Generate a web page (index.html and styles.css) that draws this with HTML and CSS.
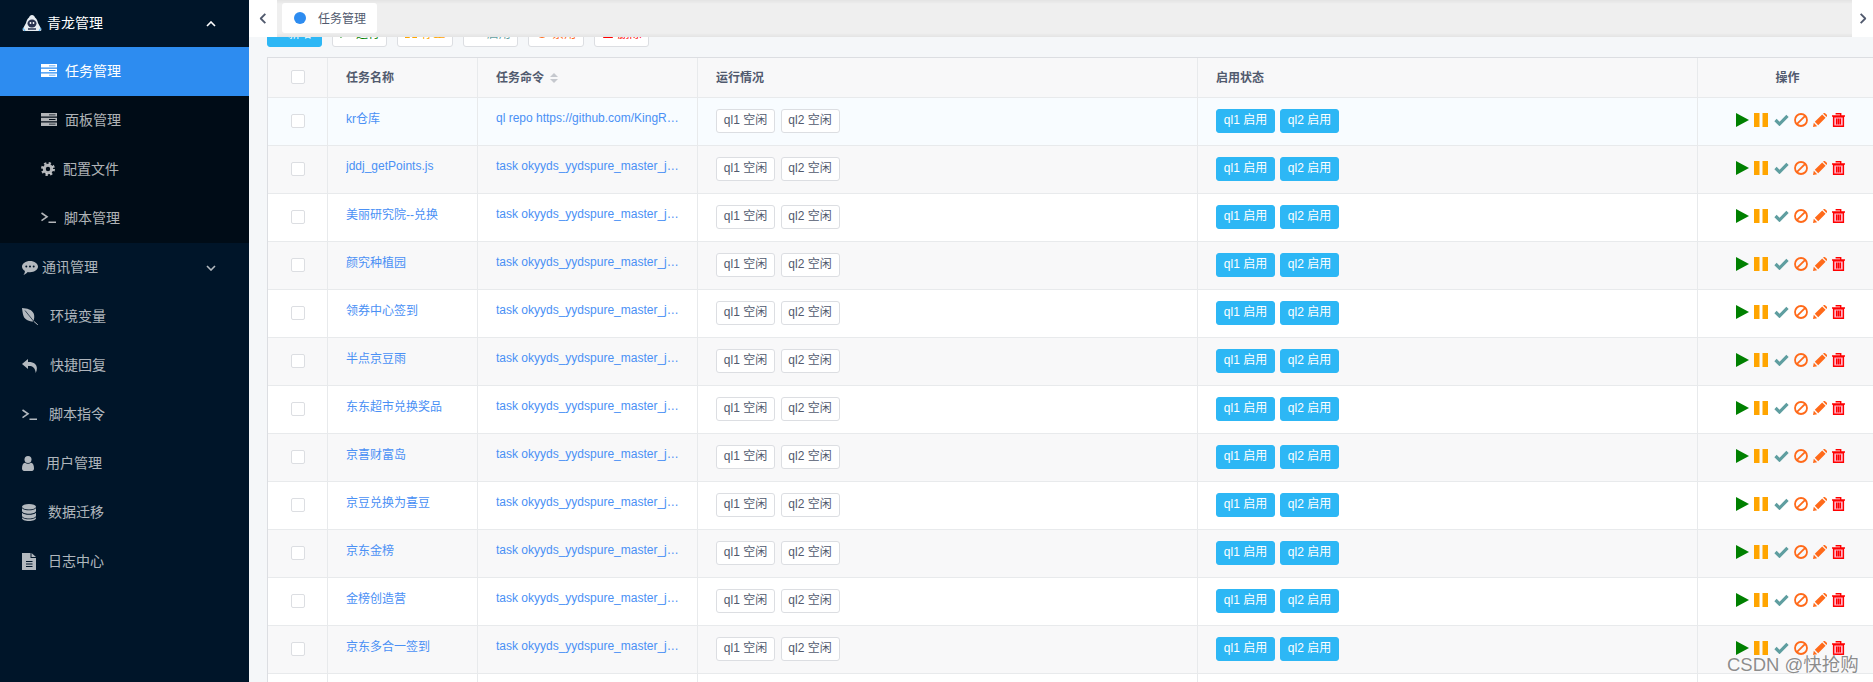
FILE: index.html
```html
<!DOCTYPE html>
<html lang="zh-CN">
  <head>
    <meta charset="UTF-8" />
    <meta name="viewport" content="width=device-width, initial-scale=1.0" />
    <title>任务管理</title>
    <link rel="stylesheet" href="styles.css">
  </head>
  <body>
    <svg class="defs" width="0" height="0">
      <symbol id="i-server" viewBox="0 0 16 13">
        <path fill-rule="evenodd" d="M0 0h16v3.6H0zM0 4.7h16v3.6H0zM0 9.4h16V13H0zM8 1.4v.8h6.5v-.8zM8 6.1v.8h6.5v-.8zM8 10.8v.8h6.5v-.8z" />
      </symbol>
      <symbol id="i-gear" viewBox="0 0 14 14">
        <circle cx="7" cy="7" r="3.7" fill="none" stroke="currentColor" stroke-width="3" />
        <circle cx="7" cy="7" r="5.9" fill="none" stroke="currentColor" stroke-width="2.2" stroke-dasharray="2.3 2.33" />
      </symbol>
      <symbol id="i-term" viewBox="0 0 15 11">
        <path d="M.5 1l5.500 3.800-5.500 3.800M7.500 10.200H15" fill="none" stroke="currentColor" stroke-width="1.600" />
      </symbol>
      <symbol id="i-msg" viewBox="0 0 16 14">
        <path fill-rule="evenodd" d="M8 0c4.4 0 8 2.5 8 5.6s-3.6 5.6-8 5.6c-.8 0-1.6-.1-2.3-.2C4.600 12.300 3 13.700 1.400 14c.8-1 1.500-2.200 1.500-4C1.100 9 0 7.400 0 5.600 0 2.500 3.600 0 8 0zM4.300 4.600a1 1 0 1 0 0 2 1 1 0 0 0 0-2zm3.700 0a1 1 0 1 0 0 2 1 1 0 0 0 0-2zm3.700 0a1 1 0 1 0 0 2 1 1 0 0 0 0-2z" />
      </symbol>
      <symbol id="i-leaf" viewBox="0 0 16 17">
        <path d="M0 0c5 .4 10 1.500 11.700 5.500 1 2.500.6 5.500-.4 8C7.500 13.500 3 12 1.500 8 .6 5.500.4 2.500 0 0z" />
        <path d="M3 2.500l8.500 10.500" fill="none" stroke="#001529" stroke-width=".7" />
        <path d="M12 13.500l3.800 3.300" fill="none" stroke="currentColor" stroke-width="1" />
      </symbol>
      <symbol id="i-reply" viewBox="0 0 16 14">
        <path d="M6 0L0 5l6 5V7c4-.3 6.800.6 7.800 7C16.600 7.500 14 2.700 6 3z" />
      </symbol>
      <symbol id="i-user" viewBox="0 0 12 15">
        <circle cx="6" cy="3.500" r="3.500" />
        <path d="M3 6.800c1.500 1.300 4.500 1.300 6 0 2 .4 3 2.200 3 5.700 0 1.500-1 2.500-2 2.500H2c-1 0-2-1-2-2.500C0 9 1 7.200 3 6.800z" />
      </symbol>
      <symbol id="i-db" viewBox="0 0 14 17">
        <ellipse cx="7" cy="2.800" rx="7" ry="2.800" />
        <path d="M0 4.300c1.500 1.500 4 2 7 2s5.500-.5 7-2V7c0 1.500-3 2.800-7 2.800S0 8.500 0 7zM0 8.700c1.500 1.500 4 2 7 2s5.500-.5 7-2v3c0 1.500-3 2.700-7 2.700S0 13.200 0 11.700zM0 13.200c1.500 1.500 4 2 7 2s5.500-.5 7-2v1c0 1.500-3 2.800-7 2.800S0 15.700 0 14.200z" />
      </symbol>
      <symbol id="i-file" viewBox="0 0 14 17">
        <path fill-rule="evenodd" d="M0 0h8.500v5H14v12H0zM4 8v1h6.500V8zM4 10.500v1h6.500v-1zM4 13v1h6.500v-1z" />
        <path d="M9.500 0L14 4H9.500z" />
      </symbol>
      <symbol id="i-play" viewBox="0 0 13 14">
        <path d="M0 0l13 7-13 7z" />
      </symbol>
      <symbol id="i-pause" viewBox="0 0 14 14">
        <path d="M0 0h5.500v14H0zM8.500 0H14v14H8.500z" />
      </symbol>
      <symbol id="i-check" viewBox="0 0 15 12">
        <path d="M1.500 6l4 4L13.500 1.800" fill="none" stroke="currentColor" stroke-width="3.200" />
      </symbol>
      <symbol id="i-ban" viewBox="0 0 14 14">
        <circle cx="7" cy="7" r="6" fill="none" stroke="currentColor" stroke-width="1.800" />
        <path d="M2.800 11.200l8.400-8.400" stroke="currentColor" stroke-width="1.800" />
      </symbol>
      <symbol id="i-pencil" viewBox="0 0 14 14">
        <path d="M0 14l.8-4.200 3.400 3.400zM1.800 8.800l7.400-7.400 3.400 3.400-7.400 7.400zM10 .6c.8-.8 1.800-.8 2.400-.2l1.200 1.200c.6.6.6 1.600-.2 2.400z" />
      </symbol>
      <symbol id="i-trash" viewBox="0 0 13 14">
        <path d="M2 4h9v9.200H2z" fill="#ffb3c7" />
        <path d="M1.600 3.800h9.800v9.500H1.600zM0 3h13M4.300 1.500V.7h4.400v1.600M4.700 5.500v6M6.500 5.500v6M8.300 5.500v6" fill="none" stroke="currentColor" stroke-width="1.400" />
      </symbol>
      <symbol id="i-chev" viewBox="0 0 10 6">
        <path d="M1 5l4-4 4 4" fill="none" stroke="currentColor" stroke-width="1.600" />
      </symbol>
    </svg>

    <aside class="sidebar">
      <div class="menu-title menu-head">
        <svg class="logo" width="20" height="17" viewBox="0 0 20 17">
          <path d="M10 0c1.500 0 2.500 1 3 2.500 1.500 1 2.500 3 3 5.500l3 5.500c.8 1.500.4 2.500-1 2.500H2c-1.400 0-1.800-1-1-2.500L4 8c.5-2.500 1.500-4.500 3-5.500C7.500 1 8.500 0 10 0z" fill="#e8edf2" />
          <ellipse cx="10" cy="8.500" rx="4.500" ry="4" fill="#2a3350" />
          <circle cx="8.500" cy="8" r=".9" fill="#fff" />
          <circle cx="11.500" cy="8" r=".9" fill="#fff" />
          <path d="M6 14h8" stroke="#2a3350" stroke-width="1.500" />
          <path d="M1 13l2 3M19 13l-2 3" stroke="#5cb6f2" stroke-width="1.200" />
        </svg>
        <span class="menu-label">青龙管理</span>
        <svg class="chev" width="10" height="6"><use href="#i-chev" /></svg>
      </div>
      <ul class="submenu">
        <li class="sub-item active">
          <svg width="16" height="13"><use href="#i-server" /></svg>
          <span>任务管理</span>
        </li>
        <li class="sub-item">
          <svg width="16" height="13"><use href="#i-server" /></svg>
          <span>面板管理</span>
        </li>
        <li class="sub-item">
          <svg width="14" height="14"><use href="#i-gear" /></svg>
          <span>配置文件</span>
        </li>
        <li class="sub-item">
          <svg width="15" height="11"><use href="#i-term" /></svg>
          <span>脚本管理</span>
        </li>
      </ul>
      <div class="menu-title menu-close">
        <svg width="16" height="14"><use href="#i-msg" /></svg>
        <span class="menu-label">通讯管理</span>
        <svg class="chev chev-down" width="10" height="6"><use href="#i-chev" /></svg>
      </div>
      <div class="menu-item">
        <svg width="16" height="17"><use href="#i-leaf" /></svg>
        <span>环境变量</span>
      </div>
      <div class="menu-item">
        <svg width="16" height="14"><use href="#i-reply" /></svg>
        <span>快捷回复</span>
      </div>
      <div class="menu-item">
        <svg width="15" height="11"><use href="#i-term" /></svg>
        <span>脚本指令</span>
      </div>
      <div class="menu-item">
        <svg width="12" height="15"><use href="#i-user" /></svg>
        <span>用户管理</span>
      </div>
      <div class="menu-item">
        <svg width="14" height="17"><use href="#i-db" /></svg>
        <span>数据迁移</span>
      </div>
      <div class="menu-item">
        <svg width="14" height="17"><use href="#i-file" /></svg>
        <span>日志中心</span>
      </div>
    </aside>

    <main class="main">
      <header class="topbar">
        <div class="tab-arrow tab-arrow-left">
          <svg width="12" height="7"><use href="#i-chev" /></svg>
        </div>
        <div class="tab-strip">
          <div class="tab">
            <span class="tab-dot"></span>
            <span class="tab-text">任务管理</span>
          </div>
        </div>
        <div class="tab-arrow tab-arrow-right">
          <svg width="12" height="7"><use href="#i-chev" /></svg>
        </div>
      </header>

      <section class="content">
        <div class="toolbar">
          <button class="tool-btn tool-add"><b class="plus">+</b><span>新增</span></button>
          <button class="tool-btn tool-run"><svg width="12" height="12"><use href="#i-play" /></svg><span>运行</span></button>
          <button class="tool-btn tool-stop"><svg width="12" height="12"><use href="#i-pause" /></svg><span>停止</span></button>
          <button class="tool-btn tool-on"><svg width="12" height="12"><use href="#i-check" /></svg><span>启用</span></button>
          <button class="tool-btn tool-off"><svg width="12" height="12"><use href="#i-ban" /></svg><span>禁用</span></button>
          <button class="tool-btn tool-del"><svg width="12" height="12"><use href="#i-trash" /></svg><span>删除</span></button>
        </div>

        <table class="task-table">
          <colgroup>
            <col class="col-check" />
            <col class="col-name" />
            <col class="col-cmd" />
            <col class="col-status" />
            <col class="col-status" />
            <col class="col-action" />
          </colgroup>
          <thead>
            <tr>
              <th class="center"><span class="check"></span></th>
              <th>任务名称</th>
              <th>任务命令 <svg class="sort" width="8" height="10" viewBox="0 0 8 10"><path d="M4 0l4 4H0zM4 10L0 6h8z" /></svg></th>
              <th>运行情况</th>
              <th>启用状态</th>
              <th class="center">操作</th>
            </tr>
          </thead>
          <tbody>
            <tr class="hover">
              <td class="center"><span class="check"></span></td>
              <td class="link-cell"><div class="clip">kr仓库</div></td>
              <td class="link-cell"><div class="clip">ql repo https://github.com/KingR…</div></td>
              <td><div class="tags tags-run"><span class="tag">ql1 空闲</span><span class="tag">ql2 空闲</span></div></td>
              <td><div class="tags"><span class="tag tag-on">ql1 启用</span><span class="tag tag-on">ql2 启用</span></div></td>
              <td><div class="actions"><svg class="a-play" width="13" height="14"><use href="#i-play" /></svg><svg class="a-pause" width="14" height="14"><use href="#i-pause" /></svg><svg class="a-check" width="15" height="12"><use href="#i-check" /></svg><svg class="a-orange" width="14" height="14"><use href="#i-ban" /></svg><svg class="a-orange" width="14" height="14"><use href="#i-pencil" /></svg><svg class="a-del" width="13" height="14"><use href="#i-trash" /></svg></div></td>
            </tr>
            <tr>
              <td class="center"><span class="check"></span></td>
              <td class="link-cell"><div class="clip">jddj_getPoints.js</div></td>
              <td class="link-cell"><div class="clip">task okyyds_yydspure_master_j…</div></td>
              <td><div class="tags tags-run"><span class="tag">ql1 空闲</span><span class="tag">ql2 空闲</span></div></td>
              <td><div class="tags"><span class="tag tag-on">ql1 启用</span><span class="tag tag-on">ql2 启用</span></div></td>
              <td><div class="actions"><svg class="a-play" width="13" height="14"><use href="#i-play" /></svg><svg class="a-pause" width="14" height="14"><use href="#i-pause" /></svg><svg class="a-check" width="15" height="12"><use href="#i-check" /></svg><svg class="a-orange" width="14" height="14"><use href="#i-ban" /></svg><svg class="a-orange" width="14" height="14"><use href="#i-pencil" /></svg><svg class="a-del" width="13" height="14"><use href="#i-trash" /></svg></div></td>
            </tr>
            <tr>
              <td class="center"><span class="check"></span></td>
              <td class="link-cell"><div class="clip">美丽研究院--兑换</div></td>
              <td class="link-cell"><div class="clip">task okyyds_yydspure_master_j…</div></td>
              <td><div class="tags tags-run"><span class="tag">ql1 空闲</span><span class="tag">ql2 空闲</span></div></td>
              <td><div class="tags"><span class="tag tag-on">ql1 启用</span><span class="tag tag-on">ql2 启用</span></div></td>
              <td><div class="actions"><svg class="a-play" width="13" height="14"><use href="#i-play" /></svg><svg class="a-pause" width="14" height="14"><use href="#i-pause" /></svg><svg class="a-check" width="15" height="12"><use href="#i-check" /></svg><svg class="a-orange" width="14" height="14"><use href="#i-ban" /></svg><svg class="a-orange" width="14" height="14"><use href="#i-pencil" /></svg><svg class="a-del" width="13" height="14"><use href="#i-trash" /></svg></div></td>
            </tr>
            <tr>
              <td class="center"><span class="check"></span></td>
              <td class="link-cell"><div class="clip">颜究种植园</div></td>
              <td class="link-cell"><div class="clip">task okyyds_yydspure_master_j…</div></td>
              <td><div class="tags tags-run"><span class="tag">ql1 空闲</span><span class="tag">ql2 空闲</span></div></td>
              <td><div class="tags"><span class="tag tag-on">ql1 启用</span><span class="tag tag-on">ql2 启用</span></div></td>
              <td><div class="actions"><svg class="a-play" width="13" height="14"><use href="#i-play" /></svg><svg class="a-pause" width="14" height="14"><use href="#i-pause" /></svg><svg class="a-check" width="15" height="12"><use href="#i-check" /></svg><svg class="a-orange" width="14" height="14"><use href="#i-ban" /></svg><svg class="a-orange" width="14" height="14"><use href="#i-pencil" /></svg><svg class="a-del" width="13" height="14"><use href="#i-trash" /></svg></div></td>
            </tr>
            <tr>
              <td class="center"><span class="check"></span></td>
              <td class="link-cell"><div class="clip">领券中心签到</div></td>
              <td class="link-cell"><div class="clip">task okyyds_yydspure_master_j…</div></td>
              <td><div class="tags tags-run"><span class="tag">ql1 空闲</span><span class="tag">ql2 空闲</span></div></td>
              <td><div class="tags"><span class="tag tag-on">ql1 启用</span><span class="tag tag-on">ql2 启用</span></div></td>
              <td><div class="actions"><svg class="a-play" width="13" height="14"><use href="#i-play" /></svg><svg class="a-pause" width="14" height="14"><use href="#i-pause" /></svg><svg class="a-check" width="15" height="12"><use href="#i-check" /></svg><svg class="a-orange" width="14" height="14"><use href="#i-ban" /></svg><svg class="a-orange" width="14" height="14"><use href="#i-pencil" /></svg><svg class="a-del" width="13" height="14"><use href="#i-trash" /></svg></div></td>
            </tr>
            <tr>
              <td class="center"><span class="check"></span></td>
              <td class="link-cell"><div class="clip">半点京豆雨</div></td>
              <td class="link-cell"><div class="clip">task okyyds_yydspure_master_j…</div></td>
              <td><div class="tags tags-run"><span class="tag">ql1 空闲</span><span class="tag">ql2 空闲</span></div></td>
              <td><div class="tags"><span class="tag tag-on">ql1 启用</span><span class="tag tag-on">ql2 启用</span></div></td>
              <td><div class="actions"><svg class="a-play" width="13" height="14"><use href="#i-play" /></svg><svg class="a-pause" width="14" height="14"><use href="#i-pause" /></svg><svg class="a-check" width="15" height="12"><use href="#i-check" /></svg><svg class="a-orange" width="14" height="14"><use href="#i-ban" /></svg><svg class="a-orange" width="14" height="14"><use href="#i-pencil" /></svg><svg class="a-del" width="13" height="14"><use href="#i-trash" /></svg></div></td>
            </tr>
            <tr>
              <td class="center"><span class="check"></span></td>
              <td class="link-cell"><div class="clip">东东超市兑换奖品</div></td>
              <td class="link-cell"><div class="clip">task okyyds_yydspure_master_j…</div></td>
              <td><div class="tags tags-run"><span class="tag">ql1 空闲</span><span class="tag">ql2 空闲</span></div></td>
              <td><div class="tags"><span class="tag tag-on">ql1 启用</span><span class="tag tag-on">ql2 启用</span></div></td>
              <td><div class="actions"><svg class="a-play" width="13" height="14"><use href="#i-play" /></svg><svg class="a-pause" width="14" height="14"><use href="#i-pause" /></svg><svg class="a-check" width="15" height="12"><use href="#i-check" /></svg><svg class="a-orange" width="14" height="14"><use href="#i-ban" /></svg><svg class="a-orange" width="14" height="14"><use href="#i-pencil" /></svg><svg class="a-del" width="13" height="14"><use href="#i-trash" /></svg></div></td>
            </tr>
            <tr>
              <td class="center"><span class="check"></span></td>
              <td class="link-cell"><div class="clip">京喜财富岛</div></td>
              <td class="link-cell"><div class="clip">task okyyds_yydspure_master_j…</div></td>
              <td><div class="tags tags-run"><span class="tag">ql1 空闲</span><span class="tag">ql2 空闲</span></div></td>
              <td><div class="tags"><span class="tag tag-on">ql1 启用</span><span class="tag tag-on">ql2 启用</span></div></td>
              <td><div class="actions"><svg class="a-play" width="13" height="14"><use href="#i-play" /></svg><svg class="a-pause" width="14" height="14"><use href="#i-pause" /></svg><svg class="a-check" width="15" height="12"><use href="#i-check" /></svg><svg class="a-orange" width="14" height="14"><use href="#i-ban" /></svg><svg class="a-orange" width="14" height="14"><use href="#i-pencil" /></svg><svg class="a-del" width="13" height="14"><use href="#i-trash" /></svg></div></td>
            </tr>
            <tr>
              <td class="center"><span class="check"></span></td>
              <td class="link-cell"><div class="clip">京豆兑换为喜豆</div></td>
              <td class="link-cell"><div class="clip">task okyyds_yydspure_master_j…</div></td>
              <td><div class="tags tags-run"><span class="tag">ql1 空闲</span><span class="tag">ql2 空闲</span></div></td>
              <td><div class="tags"><span class="tag tag-on">ql1 启用</span><span class="tag tag-on">ql2 启用</span></div></td>
              <td><div class="actions"><svg class="a-play" width="13" height="14"><use href="#i-play" /></svg><svg class="a-pause" width="14" height="14"><use href="#i-pause" /></svg><svg class="a-check" width="15" height="12"><use href="#i-check" /></svg><svg class="a-orange" width="14" height="14"><use href="#i-ban" /></svg><svg class="a-orange" width="14" height="14"><use href="#i-pencil" /></svg><svg class="a-del" width="13" height="14"><use href="#i-trash" /></svg></div></td>
            </tr>
            <tr>
              <td class="center"><span class="check"></span></td>
              <td class="link-cell"><div class="clip">京东金榜</div></td>
              <td class="link-cell"><div class="clip">task okyyds_yydspure_master_j…</div></td>
              <td><div class="tags tags-run"><span class="tag">ql1 空闲</span><span class="tag">ql2 空闲</span></div></td>
              <td><div class="tags"><span class="tag tag-on">ql1 启用</span><span class="tag tag-on">ql2 启用</span></div></td>
              <td><div class="actions"><svg class="a-play" width="13" height="14"><use href="#i-play" /></svg><svg class="a-pause" width="14" height="14"><use href="#i-pause" /></svg><svg class="a-check" width="15" height="12"><use href="#i-check" /></svg><svg class="a-orange" width="14" height="14"><use href="#i-ban" /></svg><svg class="a-orange" width="14" height="14"><use href="#i-pencil" /></svg><svg class="a-del" width="13" height="14"><use href="#i-trash" /></svg></div></td>
            </tr>
            <tr>
              <td class="center"><span class="check"></span></td>
              <td class="link-cell"><div class="clip">金榜创造营</div></td>
              <td class="link-cell"><div class="clip">task okyyds_yydspure_master_j…</div></td>
              <td><div class="tags tags-run"><span class="tag">ql1 空闲</span><span class="tag">ql2 空闲</span></div></td>
              <td><div class="tags"><span class="tag tag-on">ql1 启用</span><span class="tag tag-on">ql2 启用</span></div></td>
              <td><div class="actions"><svg class="a-play" width="13" height="14"><use href="#i-play" /></svg><svg class="a-pause" width="14" height="14"><use href="#i-pause" /></svg><svg class="a-check" width="15" height="12"><use href="#i-check" /></svg><svg class="a-orange" width="14" height="14"><use href="#i-ban" /></svg><svg class="a-orange" width="14" height="14"><use href="#i-pencil" /></svg><svg class="a-del" width="13" height="14"><use href="#i-trash" /></svg></div></td>
            </tr>
            <tr>
              <td class="center"><span class="check"></span></td>
              <td class="link-cell"><div class="clip">京东多合一签到</div></td>
              <td class="link-cell"><div class="clip">task okyyds_yydspure_master_j…</div></td>
              <td><div class="tags tags-run"><span class="tag">ql1 空闲</span><span class="tag">ql2 空闲</span></div></td>
              <td><div class="tags"><span class="tag tag-on">ql1 启用</span><span class="tag tag-on">ql2 启用</span></div></td>
              <td><div class="actions"><svg class="a-play" width="13" height="14"><use href="#i-play" /></svg><svg class="a-pause" width="14" height="14"><use href="#i-pause" /></svg><svg class="a-check" width="15" height="12"><use href="#i-check" /></svg><svg class="a-orange" width="14" height="14"><use href="#i-ban" /></svg><svg class="a-orange" width="14" height="14"><use href="#i-pencil" /></svg><svg class="a-del" width="13" height="14"><use href="#i-trash" /></svg></div></td>
            </tr>
            <tr>
              <td></td><td></td><td></td><td></td><td></td><td></td>
            </tr>
          </tbody>
        </table>
      </section>
    </main>

    <div class="watermark">CSDN @快抢购</div>
  </body>
</html>
```

FILE: styles.css
```css
* {
  box-sizing: border-box;
}

html,
body {
  height: 100%;
  margin: 0;
}

body {
  display: flex;
  height: 682px;
  overflow: hidden;
  background-color: #f5f7f9;
  color: #515a6e;
  font-family: "Liberation Sans", "Noto Sans CJK SC", sans-serif;
  font-size: 12px;
}

svg {
  fill: currentColor;
  flex-shrink: 0;
}

.defs {
  position: absolute;
}

/* sidebar */
.sidebar {
  width: 249px;
  flex-shrink: 0;
  background-color: #001529;
  color: rgba(255, 255, 255, 0.7);
  font-size: 14px;
}

.menu-title,
.menu-item {
  display: flex;
  align-items: center;
  height: 49px;
  padding-left: 22px;
}

.menu-head {
  height: 47px;
  color: #fff;
}

.menu-label {
  margin-left: 5px;
  padding-bottom: 3px;
}

.menu-close .menu-label {
  margin-left: 4px;
}

.chev {
  margin-left: auto;
  margin-right: 33px;
}

.chev-down {
  transform: rotate(180deg);
}

.menu-item span {
  margin-left: 12px;
  padding-bottom: 3px;
}

.submenu {
  margin: 0;
  padding: 0;
  list-style: none;
  background-color: #000c17;
}

.sub-item {
  display: flex;
  align-items: center;
  gap: 8px;
  height: 49px;
  padding-left: 41px;
}

.sub-item span {
  padding-bottom: 3px;
}

.sub-item svg {
  margin-bottom: 2px;
}

.sub-item.active {
  background-color: #2d8cf0;
  color: #fff;
}

/* tabs */
.main {
  flex: 1;
  min-width: 0;
  overflow: hidden;
}

.topbar {
  position: relative;
  z-index: 2;
  display: flex;
  height: 37px;
  background-color: #efefef;
  box-shadow: inset 0 0 3px 2px rgba(100, 100, 100, 0.08);
}

.tab-arrow {
  display: flex;
  align-items: center;
  justify-content: center;
  background-color: #fff;
  color: #515a6e;
}

.tab-arrow-left {
  width: 28px;
}

.tab-arrow-left svg {
  transform: rotate(-90deg);
}

.tab-arrow-right {
  width: 21px;
}

.tab-arrow-right svg {
  transform: rotate(90deg);
}

.tab-strip {
  flex: 1;
  padding: 3px 5px;
}

.tab {
  display: flex;
  align-items: center;
  gap: 12px;
  width: 95px;
  height: 30px;
  padding-left: 12px;
  background-color: #fff;
  border-radius: 3px;
}

.tab-dot {
  width: 12px;
  height: 12px;
  border-radius: 50%;
  background-color: #2d8cf0;
}

.tab-text {
  padding-bottom: 2px;
}

/* content is scrolled a little, so the toolbar slides under the tabs */
.content {
  margin-top: -16px;
  padding-left: 18px;
}

.toolbar {
  display: flex;
  gap: 10px;
  height: 26px;
  margin-bottom: 10px;
}

.tool-btn {
  display: flex;
  align-items: center;
  gap: 4px;
  width: 55.4px;
  height: 26px;
  padding: 0 0 4px 7px;
  background-color: #fff;
  border: 1px solid #dcdee2;
  border-radius: 3px;
  font: inherit;
  white-space: nowrap;
}

.tool-add {
  width: 55px;
  padding-left: 4px;
  background-color: #2db7f5;
  border-color: #2db7f5;
  color: #fff;
}

.plus {
  width: 12px;
  font-weight: normal;
  text-align: center;
}

.tool-run {
  color: #008000;
}

.tool-stop {
  color: #ffa500;
}

.tool-on {
  color: #5f9ea0;
}

.tool-off {
  color: #ff6a1a;
}

.tool-del {
  color: #ff0000;
}

/* table */
.task-table {
  width: 1611px;
  table-layout: fixed;
  border-collapse: separate;
  border-spacing: 0;
  border-top: 1px solid #dcdee2;
  border-left: 1px solid #dcdee2;
}

.col-check {
  width: 60px;
}

.col-name {
  width: 150px;
}

.col-cmd {
  width: 220px;
}

.col-status {
  width: 500px;
}

.col-action {
  width: 180px;
}

th,
td {
  padding: 0 18px;
  border-right: 1px solid #e8eaec;
  border-bottom: 1px solid #e8eaec;
  text-align: left;
}

th {
  height: 40px;
  padding-bottom: 2px;
  background-color: #f8f8f9;
  font-weight: bold;
}

td {
  height: 48px;
  background-color: #fff;
}

th.center,
td.center {
  padding: 0 0 1px;
  text-align: center;
}

th.center:last-child {
  padding: 0 0 2px;
}

tbody tr:nth-child(even) td {
  background-color: #f8f8f9;
}

tbody tr.hover td {
  background-color: #f8fcff;
}

.sort {
  margin-left: 3px;
  fill: #c5c8ce;
  vertical-align: -1px;
}

.check {
  display: inline-block;
  width: 14px;
  height: 14px;
  background-color: #fff;
  border: 1px solid #dcdee2;
  border-radius: 2px;
  vertical-align: middle;
}

.link-cell {
  padding-bottom: 8px;
  color: #4a90f5;
}

.clip {
  overflow: hidden;
  white-space: nowrap;
}

.tags {
  display: flex;
  gap: 5px;
  margin-bottom: 1px;
}

.tags-run {
  gap: 5.5px;
}

.tag {
  width: 59px;
  height: 24px;
  background-color: #fff;
  border: 1px solid #dcdee2;
  border-radius: 3px;
  line-height: 20px;
  text-align: center;
  white-space: nowrap;
}

.tag-on {
  background-color: #2db7f5;
  border-color: #2db7f5;
  color: #fff;
}

.actions {
  display: flex;
  align-items: center;
  gap: 5px;
  margin: 0 -18px 3px 20px;
}

.a-play {
  color: #008000;
}

.a-pause {
  color: #ffa500;
}

.a-check {
  margin-left: 1px;
  color: #5f9ea0;
}

.a-orange {
  color: #ff6a1a;
}

.a-del {
  color: #ff0000;
}

.watermark {
  position: absolute;
  left: 1727px;
  top: 650px;
  color: rgba(120, 120, 120, 0.85);
  font-size: 18.5px;
  white-space: nowrap;
  text-shadow: 0 0 2px #fff;
}
```
